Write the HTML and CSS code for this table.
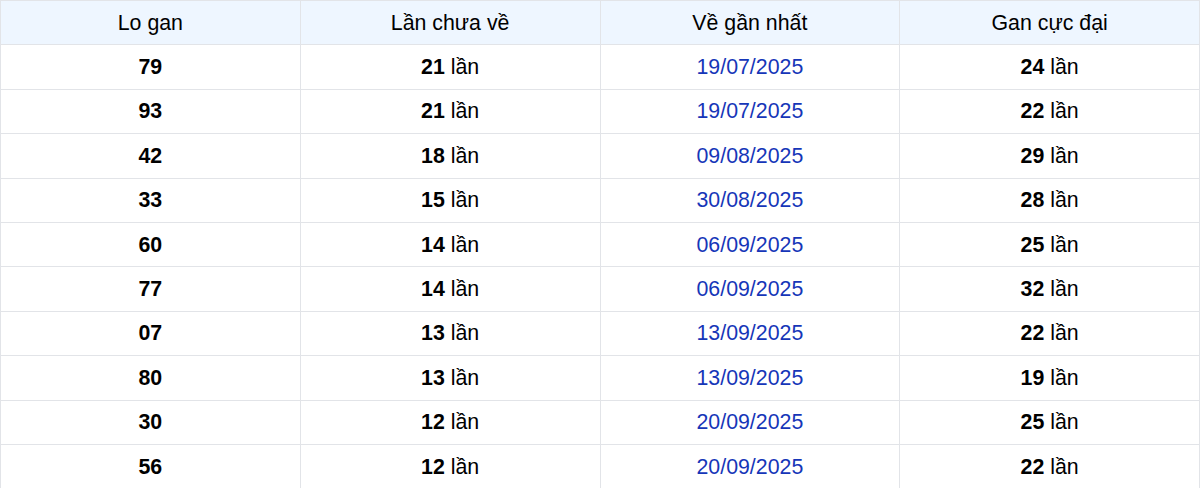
FILE: index.html
```html
<!DOCTYPE html>
<html lang="vi">
<head>
<meta charset="utf-8">
<title>Lo gan</title>
<link rel="stylesheet" href="styles.css">
</head>
<body>
<table class="gan-table">
  <thead>
    <tr><th>Lo gan</th><th>Lần chưa về</th><th>Về gần nhất</th><th>Gan cực đại</th></tr>
  </thead>
  <tbody>
    <tr><td class="num">79</td><td><b>21</b> lần</td><td class="date">19/07/2025</td><td><b>24</b> lần</td></tr>
    <tr><td class="num">93</td><td><b>21</b> lần</td><td class="date">19/07/2025</td><td><b>22</b> lần</td></tr>
    <tr><td class="num">42</td><td><b>18</b> lần</td><td class="date">09/08/2025</td><td><b>29</b> lần</td></tr>
    <tr><td class="num">33</td><td><b>15</b> lần</td><td class="date">30/08/2025</td><td><b>28</b> lần</td></tr>
    <tr><td class="num">60</td><td><b>14</b> lần</td><td class="date">06/09/2025</td><td><b>25</b> lần</td></tr>
    <tr><td class="num">77</td><td><b>14</b> lần</td><td class="date">06/09/2025</td><td><b>32</b> lần</td></tr>
    <tr><td class="num">07</td><td><b>13</b> lần</td><td class="date">13/09/2025</td><td><b>22</b> lần</td></tr>
    <tr><td class="num">80</td><td><b>13</b> lần</td><td class="date">13/09/2025</td><td><b>19</b> lần</td></tr>
    <tr><td class="num">30</td><td><b>12</b> lần</td><td class="date">20/09/2025</td><td><b>25</b> lần</td></tr>
    <tr><td class="num">56</td><td><b>12</b> lần</td><td class="date">20/09/2025</td><td><b>22</b> lần</td></tr>
  </tbody>
</table>
</body>
</html>
```
FILE: styles.css
```css
html, body {
  margin: 0;
  padding: 0;
  background: #ffffff;
}
body {
  font-family: "Liberation Sans", Arial, sans-serif;
  font-size: 21.33px;
  color: #000000;
}
.gan-table {
  width: 1200px;
  border-collapse: collapse;
  table-layout: fixed;
}
.gan-table th,
.gan-table td {
  border: 1px solid #e2e4e8;
  text-align: center;
  vertical-align: middle;
  padding: 0;
  height: 43.4px;
  line-height: 24px;
}
.gan-table th {
  background: #eef6ff;
  font-weight: normal;
  color: #000000;
}
.gan-table td.num,
.gan-table td b {
  font-weight: bold;
}
.gan-table td.date {
  color: #1636b8;
}
```
